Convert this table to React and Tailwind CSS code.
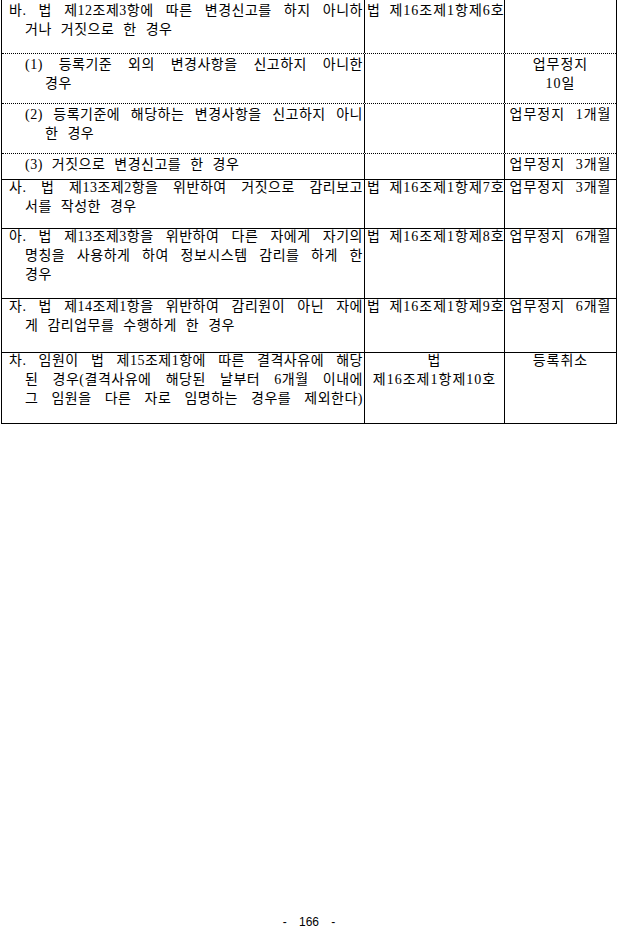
import React from 'react';

// 행정처분 기준표 (계속) - 한 줄씩 끊어서 원문 줄바꿈 유지
const rows = [
    {
        h: 'h-[53px]',
        top: '',
        pad: 'pt-[1px]',
        lines: ['바. 법 제12조제3항에 따른 변경신고를 하지 아니하', '거나 거짓으로 한 경우'],
        law: ['법 제16조제1항제6호'],
        penalty: [],
    },
    {
        h: 'h-[50px]',
        top: 'border-t border-dotted',
        pad: 'pt-[1px]',
        sub: true,
        lines: ['(1) 등록기준 외의 변경사항을 신고하지 아니한', '경우'],
        law: [],
        penalty: ['업무정지', '10일'],
    },
    {
        h: 'h-[50px]',
        top: 'border-t border-dotted',
        pad: 'pt-[1px]',
        sub: true,
        lines: ['(2) 등록기준에 해당하는 변경사항을 신고하지 아니', '한 경우'],
        law: [],
        penalty: ['업무정지 1개월'],
    },
    {
        h: 'h-[26px]',
        top: 'border-t border-dotted',
        pad: 'pt-[1px]',
        sub: true,
        lines: ['(3) 거짓으로 변경신고를 한 경우'],
        law: [],
        penalty: ['업무정지 3개월'],
    },
    {
        h: 'h-[49px]',
        top: 'border-t border-solid',
        lines: ['사. 법 제13조제2항을 위반하여 거짓으로 감리보고', '서를 작성한 경우'],
        law: ['법 제16조제1항제7호'],
        penalty: ['업무정지 3개월'],
    },
    {
        h: 'h-[70px]',
        top: 'border-t border-solid',
        lines: ['아. 법 제13조제3항을 위반하여 다른 자에게 자기의', '명칭을 사용하게 하여 정보시스템 감리를 하게 한', '경우'],
        law: ['법 제16조제1항제8호'],
        penalty: ['업무정지 6개월'],
    },
    {
        h: 'h-[54px]',
        top: 'border-t border-solid',
        lines: ['자. 법 제14조제1항을 위반하여 감리원이 아닌 자에', '게 감리업무를 수행하게 한 경우'],
        law: ['법 제16조제1항제9호'],
        penalty: ['업무정지 6개월'],
    },
    {
        h: 'h-[72px]',
        top: 'border-t border-b border-solid',
        lines: ['차. 임원이 법 제15조제1항에 따른 결격사유에 해당', '된 경우(결격사유에 해당된 날부터 6개월 이내에', '그 임원을 다른 자로 임명하는 경우를 제외한다)'],
        lastFull: true,
        law: ['법', '제16조제1항제10호'],
        lawCenter: true,
        penalty: ['등록취소'],
    },
];

function Row({ row }) {
    const pad = row.pad || '-mt-[2px]';
    return (
        <div className={`flex border-black ${row.top} ${row.h}`}>
            <div className="w-[363px] shrink-0 border-r border-solid border-black pl-[7px] pr-[1px] tracking-[0.5px] [word-spacing:5px]">
                <div className={pad}>
                    {row.lines.map((line, i) => {
                        const last = i === row.lines.length - 1 && !row.lastFull;
                        let indent = '';
                        if (row.sub) indent = i === 0 ? 'pl-[16px]' : 'pl-[36px]';
                        else if (i > 0) indent = 'pl-[16px]';
                        return (
                            <div key={i} className={`${indent} ${last ? 'text-left' : 'text-justify [text-align-last:justify]'}`}>
                                {line}
                            </div>
                        );
                    })}
                </div>
            </div>
            <div className={`w-[140px] shrink-0 border-r border-solid border-black tracking-[1px] [word-spacing:4px] whitespace-nowrap ${row.lawCenter ? 'text-center' : 'pl-[2px]'}`}>
                <div className={pad}>
                    {row.law.map((t, i) => (
                        <div key={i}>{t}</div>
                    ))}
                </div>
            </div>
            <div className="flex-1 text-center tracking-[1px] [word-spacing:6px] whitespace-nowrap">
                <div className={pad}>
                    {row.penalty.map((t, i) => (
                        <div key={i}>{t}</div>
                    ))}
                </div>
            </div>
        </div>
    );
}

export default function App() {
    return (
        <div className="h-[930px] flex flex-col bg-white text-black font-['Liberation_Serif','Noto_Sans_CJK_KR',serif] text-[14px] leading-[19px]">
            <div className="ml-[1px] w-[616px] border-l border-r border-solid border-black">
                {rows.map((row, i) => (
                    <Row key={i} row={row} />
                ))}
            </div>
            <div className="mt-auto h-[15px] text-center text-[12px] leading-[14px] font-['Liberation_Sans','Noto_Sans_CJK_KR',sans-serif] [word-spacing:9px]">
                - 166 -
            </div>
        </div>
    );
}
